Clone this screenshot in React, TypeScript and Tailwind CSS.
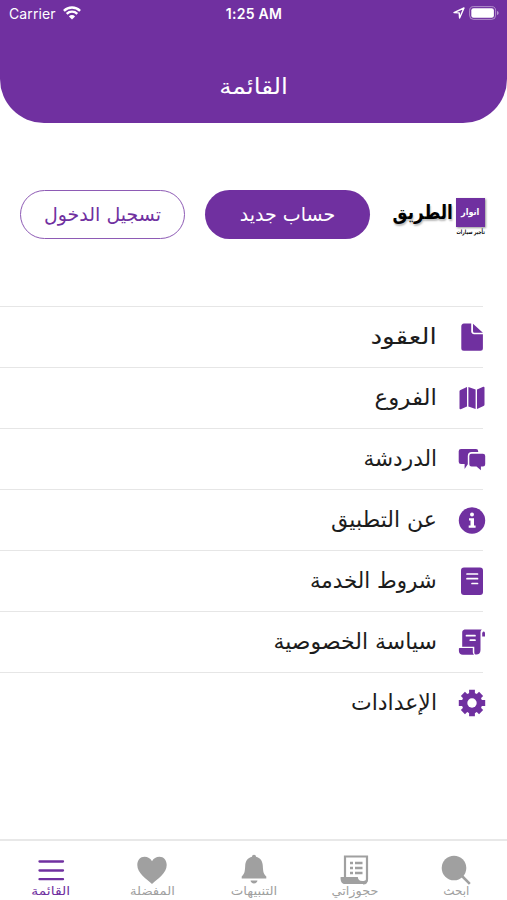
import type { ReactNode } from "react";

interface MenuItem {
  label: string;
  icon: ReactNode;
  textClass: string;
}

interface TabItem {
  label: string;
  icon: ReactNode;
  textClass: string;
  active?: boolean;
}

const menuItems: MenuItem[] = [
  {
    label: "العقود",
    textClass: "scale-x-[1.19]",
    icon: (
      <svg viewBox="0 0 28 28" className="h-7 w-7" fill="currentColor">
        <path d="M6 0.5H13.2v7.800c0 1.700 1.100 2.900 2.900 2.900h8.800v14a2.500 2.500 0 0 1-2.500 2.500H5.800a2.500 2.500 0 0 1-2.500-2.500V3.500a3 3 0 0 1 2.700-3z" />
        <path d="M15 .8l9.900 9H16.500a1.500 1.500 0 0 1-1.500-1.500z" />
      </svg>
    ),
  },
  {
    label: "الفروع",
    textClass: "scale-x-[1.04]",
    icon: (
      <svg viewBox="0 0 28 28" className="h-7 w-7" fill="currentColor">
        <path d="M1.500 7.300c0-.7.4-1.200 1-1.400L9 3v19.400l-6.300 2.800c-.6.200-1.200-.2-1.200-.8zM10.400 3l7.200 2.600V25l-7.200-2.600zM19 5.600l6.300-2.800c.6-.2 1.200.2 1.200.8v17c0 .7-.4 1.200-1 1.400L19 25z" />
      </svg>
    ),
  },
  {
    label: "الدردشة",
    textClass: "scale-x-[0.98]",
    icon: (
      <svg viewBox="0 0 28 28" className="h-7 w-7" fill="currentColor">
        <path d="M3 4h15a2.200 2.200 0 0 1 2.200 2.200v.9h-6.400a4 4 0 0 0-4 4v8.100L6.600 24v-5H3a2.300 2.300 0 0 1-2.300-2.300V6.300A2.300 2.300 0 0 1 3 4z" />
        <path d="M13.600 8.700h11.300a2.300 2.300 0 0 1 2.300 2.300v8.200a2.300 2.300 0 0 1-2.300 2.300h-2v3.800L18.500 21.500h-4.900a2.300 2.300 0 0 1-2.300-2.300V11a2.300 2.300 0 0 1 2.300-2.300z" />
      </svg>
    ),
  },
  {
    label: "عن التطبيق",
    textClass: "scale-x-100",
    icon: (
      <svg viewBox="0 0 28 28" className="h-7 w-7">
        <circle cx="14" cy="14.500" r="13.200" fill="currentColor" />
        <circle cx="14" cy="8.600" r="2" fill="white" />
        <path d="M11 12.200h5v7.300h1.600v2.200h-6.900v-2.200h1.800v-5H11z" fill="white" />
      </svg>
    ),
  },
  {
    label: "شروط الخدمة",
    textClass: "scale-x-[0.97]",
    icon: (
      <svg viewBox="0 0 28 28" className="h-7 w-7">
        <rect x="3" y="0.500" width="22" height="27.500" rx="3" fill="currentColor" />
        <path d="M9 7h10.500M9 11.700h10.500M14 16.500h5.500" stroke="white" strokeWidth="1.700" strokeLinecap="round" />
      </svg>
    ),
  },
  {
    label: "سياسة الخصوصية",
    textClass: "scale-x-100",
    icon: (
      <svg viewBox="0 0 28 28" className="h-7 w-7">
        <path
          d="M6.500 1.500h17.300c-1 .8-1.300 1.800-1.300 3.200V22c0 3-1.700 4.600-4.200 4.600-1.500 0-2-.9-2-2.400v-5.500H4.200V4.300c0-1.300 1-2.500 2.300-2.800z"
          fill="currentColor"
        />
        <path d="M1.500 20h13.300v3.500c0 1.400.3 2.400 1.200 3.200H4.800c-2.300 0-3.900-1.500-3.900-3.800V20.600z" fill="currentColor" />
        <path d="M24.200 5.500c0-1 .6-2.100 1.500-2.100s1.300 1 1.300 2.100v3h-2.800z" fill="currentColor" />
        <path d="M8.500 7.700h8.500M12.300 12.200h4.700" stroke="white" strokeWidth="1.700" strokeLinecap="round" />
      </svg>
    ),
  },
  {
    label: "الإعدادات",
    textClass: "scale-x-100",
    icon: (
      <svg viewBox="0 0 28 28" className="h-7 w-7">
        <g stroke="currentColor" strokeWidth="5.800" strokeLinejoin="round">
          <path d="M14 .8v26.400M.8 14h26.400M4.900 4.900l18.200 18.200M23.100 4.900L4.900 23.100" />
        </g>
        <circle cx="14" cy="14" r="10.300" fill="currentColor" />
        <circle cx="14" cy="14" r="4.700" fill="white" />
      </svg>
    ),
  },
];

const tabs: TabItem[] = [
  {
    label: "ابحث",
    textClass: "scale-x-100",
    icon: (
      <svg viewBox="0 0 32 32" className="h-8 w-8" fill="currentColor">
        <circle cx="14" cy="15" r="12.300" />
        <path d="M21.500 22.500l8.300 8.300" stroke="currentColor" strokeWidth="2.600" />
      </svg>
    ),
  },
  {
    label: "حجوزاتي",
    textClass: "scale-x-[1.07]",
    icon: (
      <svg viewBox="0 0 32 32" className="h-8 w-8" fill="none" stroke="currentColor">
        <path d="M6 24V3.500h22V26c0 3-1.500 4.500-4 4.500" strokeWidth="2.200" />
        <path d="M1.600 24h17.200c.3 2.500 1.500 4 4.500 4 2 0 3.500-.6 5.700-1.500-.5 2.800-2 4.500-5.700 4.500H5.800c-2.800 0-4.500-2.200-4.200-7z" fill="currentColor" stroke="none" />
        <path d="M11 10h3M16 10h7.500M11 15h3M16 15h7.500M11 20h3M16 20h7.500" strokeWidth="2.300" />
      </svg>
    ),
  },
  {
    label: "التنبيهات",
    textClass: "scale-x-[1.11]",
    icon: (
      <svg viewBox="0 0 32 32" className="h-8 w-8" fill="currentColor">
        <path d="M16 1.800c1.200 0 2 .8 2 2 4.300 1 6.500 4.300 6.800 9 .3 6 .7 8.300 3.500 10.700v2H3.700v-2c2.800-2.400 3.200-4.700 3.500-10.700.3-4.700 2.500-8 6.800-9 0-1.200.8-2 2-2z" />
        <path d="M12.500 27.500h7c-.3 1.700-1.500 2.900-3.500 2.900s-3.200-1.200-3.500-2.900z" />
      </svg>
    ),
  },
  {
    label: "المفضلة",
    textClass: "scale-x-[1.1]",
    icon: (
      <svg viewBox="0 0 32 32" className="h-8 w-8" fill="currentColor">
        <path d="M16 31C10.500 26 1.300 20 1.300 12c0-4.800 3-8.300 7.200-8.300 3.300 0 6 1.600 7.500 4.500 1.500-2.900 4.200-4.500 7.500-4.500 4.200 0 7.200 3.500 7.200 8.300 0 8-9.200 14-14.700 19z" />
      </svg>
    ),
  },
  {
    label: "القائمة",
    textClass: "scale-x-[1.16]",
    active: true,
    icon: (
      <svg viewBox="0 0 32 32" className="h-8 w-8">
        <path d="M4.500 8.500h23.500M4.500 17.500h23.500M4.500 26.200h23.500" stroke="currentColor" strokeWidth="2.300" strokeLinecap="round" />
      </svg>
    ),
  },
];

function StatusBar() {
  return (
    <div dir="ltr" className="grid h-[26px] grid-cols-3 items-center pr-2 pl-[9px] font-['Inter'] text-white">
      <div className="flex items-center gap-[7px]">
        <span className="text-[14px] tracking-[0.1px]">Carrier</span>
        <svg viewBox="0 0 18 14" className="h-[14px] w-[18px]" fill="none" stroke="currentColor">
          <path d="M.9 4.800a11.600 11.600 0 0 1 16.200 0M3.700 7.800a7.600 7.600 0 0 1 10.600 0" strokeWidth="2.400" />
          <path d="M9 13.500L5.900 10.400a4.400 4.400 0 0 1 6.200 0z" fill="currentColor" stroke="none" />
        </svg>
      </div>
      <span className="text-center text-[14px] font-semibold tracking-[0.3px]">1:25 AM</span>
      <div className="flex items-center justify-end gap-1">
        <svg viewBox="0 0 12 12" className="h-3 w-3" fill="none" stroke="currentColor" strokeWidth="1.400" strokeLinejoin="round">
          <path d="M1 5.600L11 1 6.600 11 6.200 5.900z" />
        </svg>
        <svg viewBox="0 0 30 14" className="h-[14px] w-[30px]">
          <rect x=".6" y=".6" width="26" height="12.800" rx="4" fill="none" stroke="white" strokeOpacity=".45" />
          <rect x="2.300" y="2.300" width="22.600" height="9.400" rx="2.200" fill="white" />
          <path d="M28 5v4c1-.4 1.600-1.100 1.600-2S29 5.400 28 5z" fill="white" fillOpacity=".5" />
        </svg>
      </div>
    </div>
  );
}

function Logo() {
  return (
    <div className="flex w-[93px] items-start gap-[3px]">
      <div className="mt-1 mr-px w-[29px] shrink-0">
        <div className="flex h-[29px] items-center justify-center bg-[#7030a0] shadow-[1px_1px_2px_#999]">
          <span className="scale-x-[0.9] text-[9px] font-bold whitespace-nowrap text-white">انوار</span>
        </div>
        <div className="flex h-2 items-center justify-center text-[6px] font-bold whitespace-nowrap text-black">
          <span className="scale-x-[0.72]">تأجير سيارات</span>
        </div>
      </div>
      <span className="mt-[3px] inline-block origin-right scale-x-[0.84] text-[20px] leading-[30px] font-bold whitespace-nowrap text-black [text-shadow:1px_2px_2px_#bbb]">
        الطريق
      </span>
    </div>
  );
}

export default function App() {
  return (
    <div dir="rtl" className="flex h-[900px] w-[507px] flex-col overflow-hidden bg-white font-['DejaVu_Sans',sans-serif]">
      <header className="h-[123px] shrink-0 rounded-b-[44px] bg-[#7030a0]">
        <StatusBar />
        <h1 className="mt-[47px] text-center text-[22px] leading-7 text-white">
          <span className="inline-block scale-x-[1.12]">القائمة</span>
        </h1>
      </header>

      <div className="mt-[67px] flex h-[49px] shrink-0 items-center pr-[21px]">
        <Logo />
        <button className="mr-[23px] h-[49px] w-[165px] rounded-full bg-[#7030a0] text-[19px] text-white">
          <span className="inline-block">حساب جديد</span>
        </button>
        <button className="mr-[20px] h-[49px] w-[165px] rounded-full border-[1.5px] border-[#8e5bb5] text-[19px] text-[#7030a0]">
          <span className="inline-block">تسجيل الدخول</span>
        </button>
      </div>

      <ul className="mt-[67px] flex-1">
        {menuItems.map((item) => (
          <li key={item.label} className="relative flex h-[61px] items-center pr-[21px] text-[#7030a0]">
            <div className="absolute top-0 right-6 left-0 h-px bg-[#e6e6e6]" />
            {item.icon}
            <span className={`mr-[21px] inline-block origin-right text-[22px] leading-7 whitespace-nowrap text-[#1c1c1c] ${item.textClass}`}>
              {item.label}
            </span>
          </li>
        ))}
      </ul>

      <nav className="grid h-[61px] shrink-0 grid-cols-5 border-t-2 border-[#e8e8e8]">
        {tabs.map((tab) => (
          <div key={tab.label} className={`flex flex-col items-center pt-3 ${tab.active ? "text-[#7030a0]" : "text-[#a0a0a0]"}`}>
            {tab.icon}
            <span className={`inline-block text-[12px] leading-3 whitespace-nowrap ${tab.textClass}`}>{tab.label}</span>
          </div>
        ))}
      </nav>
    </div>
  );
}
